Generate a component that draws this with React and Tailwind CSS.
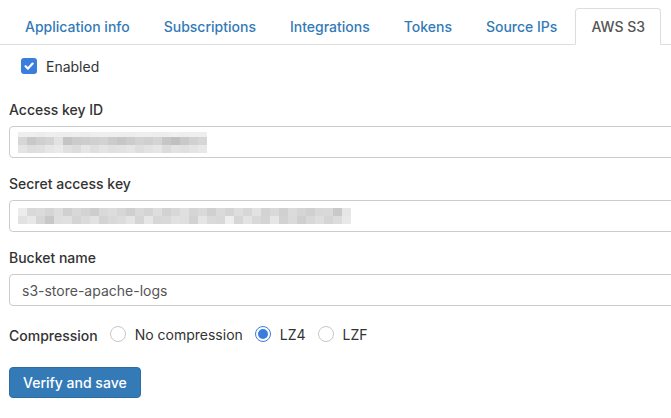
import React from "react";

const TABS = ["Application info", "Subscriptions", "Integrations", "Tokens", "Source IPs", "AWS S3"];

// pixelated, blurred secrets
const KEY_ROWS = [
  ["#eee", "#eee", "#ececec", "#efefef", "#eee", "#ededed", "#eee", "#ececec", "#eee", "#efefef", "#eee", "#eee", "#ededed", "#eee", "#eee", "#ededed", "#eee", "#f0f0f0", "#eee", "#eee", "#eee"],
  ["#d6d6d6", "#c8c8c8", "#cfcfcf", "#d3d3d3", "#e2e2e2", "#c4c4c4", "#cbcbcb", "#cdcdcd", "#d0d0d0", "#d2d2d2", "#cbcbcb", "#c6c6c6", "#cccccc", "#d2d2d2", "#cfcfcf", "#d4d4d4", "#c6c6c6", "#c0c0c0", "#c9c9c9", "#d1d1d1", "#d6d6d6"],
  ["#e4e4e4", "#dedede", "#e0e0e0", "#e6e6e6", "#eaeaea", "#e0e0e0", "#dcdcdc", "#e6e6e6", "#dfdfdf", "#e4e4e4", "#e0e0e0", "#e2e2e2", "#e5e5e5", "#dedede", "#e3e3e3", "#e6e6e6", "#dcdcdc", "#e3e3e3", "#e0e0e0", "#e4e4e4", "#e8e8e8"],
];

const SECRET_ROWS = [
  ["#ececec", "#d9d9d9", "#dbdbdb", "#d5d5d5", "#dddddd", "#d0d0d0", "#d8d8d8", "#d3d3d3", "#cdcdcd", "#d9d9d9", "#dcdcdc", "#d6d6d6", "#cfcfcf", "#d9d9d9", "#d4d4d4", "#dedede", "#d2d2d2", "#d8d8d8", "#e0e0e0", "#d5d5d5", "#d9d9d9", "#d0d0d0", "#dadada", "#d4d4d4", "#dedede", "#d7d7d7", "#e2e2e2", "#d3d3d3", "#d9d9d9", "#d0d0d0", "#dbdbdb", "#d5d5d5", "#d0d0d0", "#d8d8d8", "#d9d9d9", "#c9c9c9", "#e6e6e6"],
  ["#e2e2e2", "#e8e8e8", "#d6d6d6", "#c8c8c8", "#dedede", "#e0e0e0", "#d4d4d4", "#dbdbdb", "#e2e2e2", "#d3d3d3", "#d9d9d9", "#dcdcdc", "#e4e4e4", "#d5d5d5", "#e6e6e6", "#d7d7d7", "#d9d9d9", "#e1e1e1", "#dfdfdf", "#d2d2d2", "#e5e5e5", "#dadada", "#d8d8d8", "#eeeeee", "#d6d6d6", "#e3e3e3", "#d9d9d9", "#d4d4d4", "#e6e6e6", "#d2d2d2", "#dadada", "#cfcfcf", "#d8d8d8", "#dedede", "#d5d5d5", "#dcdcdc", "#e9e9e9"],
];

function Pixels({ rows }) {
  return (
    <div className="flex flex-col">
      {rows.map((row, i) => (
        <div key={i} className="flex">
          {row.map((c, j) => (
            <div key={j} className={i === 0 && rows.length === 3 ? "w-[9px] h-[5px]" : "w-[9px] h-[8px]"} style={{ backgroundColor: c }} />
          ))}
        </div>
      ))}
    </div>
  );
}

function Field({ label, children }) {
  return (
    <div className="mb-[16px]">
      <div className="text-[14px] leading-[20px] font-medium text-[#333] mb-[6px]">{label}</div>
      <div className="h-[32px] w-[700px] border border-[#ccc] rounded-[4px] flex items-center px-[8px] text-[14px] text-[#555]">
        {children}
      </div>
    </div>
  );
}

function Radio({ checked, label }) {
  return (
    <div className="flex items-center">
      <span
        className={
          checked
            ? "w-[16px] h-[16px] rounded-full border border-[#3b7ddd] flex items-center justify-center"
            : "w-[16px] h-[16px] rounded-full border border-[#c8c8c8] bg-white"
        }
      >
        {checked && <span className="w-[10px] h-[10px] rounded-full bg-[#3b7ddd]" />}
      </span>
      <span className="ml-[9px] text-[14px] text-[#333]">{label}</span>
    </div>
  );
}

export default function App() {
  return (
    <div className="w-[671px] h-[418px] overflow-hidden bg-white font-['Inter','Liberation_Sans',sans-serif]">
      <ul className="flex pt-[8px] pl-[9px] border-b border-[#ddd]">
        {TABS.map((t) => {
          const active = t === "AWS S3";
          return (
            <li key={t} className="mr-[2px] -mb-px">
              <div
                className={
                  active
                    ? "px-[15px] h-[37px] flex items-center border border-[#ddd] border-b-white rounded-t-[4px] bg-white text-[#555] text-[14px] font-medium"
                    : "px-[15px] h-[37px] flex items-center border border-transparent text-[#337ab7] text-[14px] font-medium"
                }
              >
                {t}
              </div>
            </li>
          );
        })}
      </ul>

      <div className="px-[9px]">
        <label className="flex items-center h-[20px] mt-[11px] ml-[12px]">
          <span className="w-[16px] h-[16px] rounded-[3px] bg-[#3b7ddd] flex items-center justify-center">
            <svg width="10" height="10" viewBox="0 0 10 10">
              <path d="M1.6 5.2 L4 7.6 L8.6 2.6" fill="none" stroke="white" strokeWidth="2.2" strokeLinecap="round" strokeLinejoin="round" />
            </svg>
          </span>
          <span className="ml-[9px] text-[14px] text-[#333]">Enabled</span>
        </label>

        <div className="mt-[24px]">
          <Field label="Access key ID">
            <Pixels rows={KEY_ROWS} />
          </Field>
          <Field label="Secret access key">
            <Pixels rows={SECRET_ROWS} />
          </Field>
          <Field label="Bucket name">
            <span className="pl-[4px]">s3-store-apache-logs</span>
          </Field>
        </div>

        <div className="flex items-center gap-[12px] mt-[13px]">
          <span className="text-[14px] font-medium text-[#333] mt-[3px]">Compression</span>
          <div className="flex items-center gap-[12px]">
            <Radio label="No compression" />
            <Radio checked label="LZ4" />
            <Radio label="LZF" />
          </div>
        </div>

        <button className="mt-[21px] h-[31px] px-[13px] bg-[#337ab7] border border-[#2e6da4] rounded-[4px] text-white text-[14px] font-medium">
          Verify and save
        </button>
      </div>
    </div>
  );
}
